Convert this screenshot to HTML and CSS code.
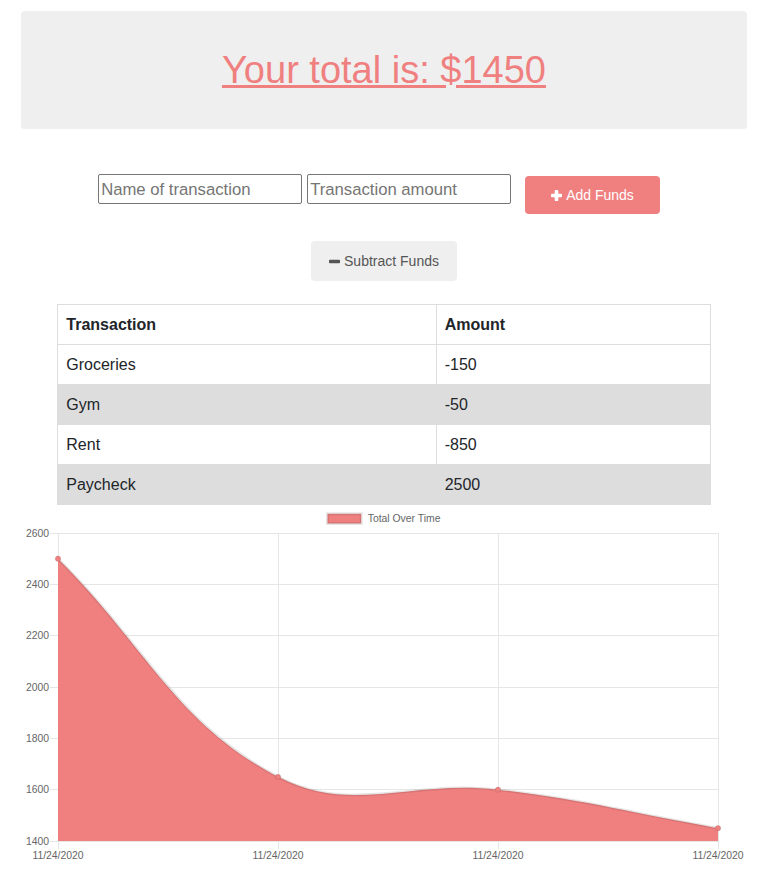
FILE: index.html
```html
<!DOCTYPE html>
<html lang="en">
<head>
<meta charset="utf-8">
<title>Budget Tracker</title>
<link rel="stylesheet" href="styles.css">
</head>
<body>
<div class="page">
  <header class="total-box">
    <a class="total-link" href="#">Your total is: $1450</a>
  </header>

  <form class="entry-form">
    <input class="field" type="text" placeholder="Name of transaction">
    <input class="field field-amount" type="text" placeholder="Transaction amount">
    <button class="btn btn-add" type="button">
      <svg class="icon" viewBox="0 0 11 11" width="11" height="11" aria-hidden="true"><rect x="0" y="3.7" width="11" height="3.6" rx="0.8"/><rect x="3.7" y="0" width="3.6" height="11" rx="0.8"/></svg>
      <span>Add Funds</span>
    </button>
  </form>

  <div class="sub-row">
    <button class="btn btn-sub" type="button">
      <svg class="icon" viewBox="0 0 11 11" width="11" height="11" aria-hidden="true"><rect x="0" y="3.7" width="11" height="3.6" rx="0.8"/></svg>
      <span>Subtract Funds</span>
    </button>
  </div>

  <table class="tx-table">
    <colgroup><col class="col-name"><col class="col-amount"></colgroup>
    <thead>
      <tr><th>Transaction</th><th>Amount</th></tr>
    </thead>
    <tbody>
      <tr><td>Groceries</td><td>-150</td></tr>
      <tr><td>Gym</td><td>-50</td></tr>
      <tr><td>Rent</td><td>-850</td></tr>
      <tr><td>Paycheck</td><td>2500</td></tr>
    </tbody>
  </table>

  <div class="chart-wrap">
    <svg class="chart" viewBox="0 0 726 363" width="726" height="363">
      <g class="legend">
        <rect x="306.5" y="8.8" width="33.7" height="9.7" fill="#f08080" stroke="rgba(0,0,0,0.1)" stroke-width="3"/>
        <text class="chart-text" x="346.7" y="17.2">Total Over Time</text>
      </g>
      <g class="grid" stroke="#e6e6e6" stroke-width="1">
        <line x1="29" y1="28.5" x2="697" y2="28.5"/>
        <line x1="29" y1="79.5" x2="697" y2="79.5"/>
        <line x1="29" y1="130.5" x2="697" y2="130.5"/>
        <line x1="29" y1="182.5" x2="697" y2="182.5"/>
        <line x1="29" y1="233.5" x2="697" y2="233.5"/>
        <line x1="29" y1="284.5" x2="697" y2="284.5"/>
        <line x1="29" y1="336.5" x2="697" y2="336.5"/>
        <line x1="37.5" y1="28" x2="37.5" y2="344"/>
        <line x1="257.5" y1="28" x2="257.5" y2="344"/>
        <line x1="477.5" y1="28" x2="477.5" y2="344"/>
        <line x1="697.5" y1="28" x2="697.5" y2="344"/>
      </g>
      <path fill="#f08080" d="M37,53.67 C125,140.93 154.15,217.83 257,271.83 C330.15,310.23 389.59,274.47 477,284.67 C565.59,295.01 609,307.77 697,323.17 L697,336 L37,336 Z"/>
      <path fill="none" stroke="rgba(0,0,0,0.1)" stroke-width="2.7" d="M37,53.67 C125,140.93 154.15,217.83 257,271.83 C330.15,310.23 389.59,274.47 477,284.67 C565.59,295.01 609,307.77 697,323.17"/>
      <g fill="#f08080" stroke="rgba(0,0,0,0.1)" stroke-width="1">
        <circle cx="37" cy="53.67" r="2.7"/>
        <circle cx="257" cy="271.83" r="2.7"/>
        <circle cx="477" cy="284.67" r="2.7"/>
        <circle cx="697" cy="323.17" r="2.7"/>
      </g>
      <g class="chart-text" text-anchor="end">
        <text x="28" y="31.7">2600</text>
        <text x="28" y="83">2400</text>
        <text x="28" y="134.4">2200</text>
        <text x="28" y="185.7">2000</text>
        <text x="28" y="237">1800</text>
        <text x="28" y="288.4">1600</text>
        <text x="28" y="339.7">1400</text>
      </g>
      <g class="chart-text" text-anchor="middle">
        <text x="37" y="354">11/24/2020</text>
        <text x="257" y="354">11/24/2020</text>
        <text x="477" y="354">11/24/2020</text>
        <text x="697" y="354">11/24/2020</text>
      </g>
    </svg>
  </div>
</div>
</body>
</html>
```

FILE: styles.css
```css
html, body {
  margin: 0;
  padding: 0;
  background: #ffffff;
}

body {
  font-family: "Liberation Sans", Arial, Helvetica, sans-serif;
  color: #212529;
}

.page {
  padding: 11px 10px 0 21px;
}

.total-box {
  height: 118px;
  background: #efefef;
  border-radius: 4px;
  display: flex;
  align-items: center;
  justify-content: center;
}

.total-link {
  font-size: 38px;
  color: #f08080;
  text-decoration: underline;
}

.entry-form {
  display: flex;
  justify-content: center;
  align-items: flex-start;
  margin: 45px 0 0;
  padding-right: 10px;
}

.field {
  width: 204px;
  height: 30px;
  box-sizing: border-box;
  border: 1px solid #767676;
  border-radius: 2px;
  padding: 2px 2px 0;
  margin: 0;
  font-family: "Liberation Sans", Arial, sans-serif;
  font-size: 16.7px;
  color: #212529;
  background: #fff;
}

.field::placeholder {
  color: #757575;
}

.field-amount {
  margin-left: 5px;
}

.btn {
  display: inline-flex;
  align-items: center;
  gap: 4px;
  border: 0;
  border-radius: 4px;
  font-family: "Liberation Sans", Arial, sans-serif;
  font-size: 14px;
  cursor: pointer;
  box-sizing: border-box;
}

.icon {
  display: block;
  fill: currentColor;
}

.btn-add {
  background: #f08080;
  color: #ffffff;
  height: 38px;
  padding: 0 26px;
  margin: 2px 0 0 14px;
}

.sub-row {
  display: flex;
  justify-content: center;
  margin-top: 27px;
}

.btn-sub {
  background: #efefef;
  color: #555555;
  height: 40px;
  padding: 0 18px;
}

.tx-table {
  width: 90%;
  margin: 23px auto 0;
  border-collapse: collapse;
  font-size: 16px;
  color: #212529;
}

.col-name {
  width: 58%;
}

.tx-table th,
.tx-table td {
  border: 1px solid #dddddd;
  padding: 0 8px;
  height: 39px;
  text-align: left;
}

.tx-table th {
  font-weight: bold;
}

.tx-table tbody tr:nth-child(even) {
  background: #dddddd;
}

.chart-wrap {
  margin-top: 0;
}

.chart {
  display: block;
}

.chart-text {
  font-family: "Liberation Sans", Arial, sans-serif;
  font-size: 10.4px;
  fill: #666666;
}
```
